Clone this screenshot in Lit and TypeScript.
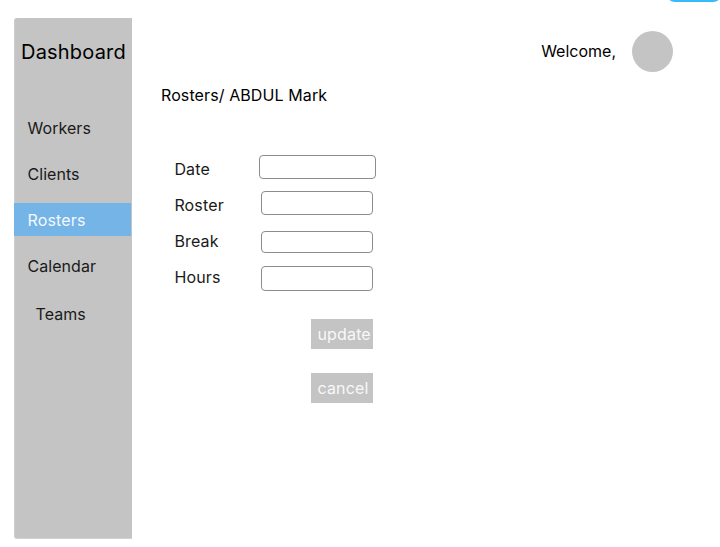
import { LitElement, html, css } from "lit";
import { customElement } from "lit/decorators.js";

@customElement("app-sidebar")
class AppSidebar extends LitElement {
  static styles = css`
    :host { display: block; flex: none; width: 118px; height: 521px; margin: 18px 0 0 14px;
      box-sizing: border-box; background: #c4c4c4; border-radius: 3px 0 0 3px;
      border-left: 1px solid #cecece; border-bottom: 1px solid #d2d2d2; }
    .title { box-sizing: border-box; margin: 0; padding: 21px 0 0 6px; height: 87px; font-size: 20px;
      line-height: 26px; font-weight: 400; letter-spacing: 0.2px; color: #000; white-space: nowrap; }
    nav { display: flex; flex-direction: column; margin: 6px 0 0 -1px; }
    .item { height: 33px; line-height: 35px; margin-bottom: 13px; padding-left: 13.5px; width: 103.5px;
      color: #1a1a1a; letter-spacing: 0.05px; }
    .active { background: #74b4e7; color: #f4f9fd; letter-spacing: 0.15px; }
    .last { margin-top: 2px; padding-left: 21.5px; width: 95.5px; }
  `;
  render() {
    return html`<h1 class="title">Dashboard</h1>
      <nav>
        <div class="item">Workers</div>
        <div class="item">Clients</div>
        <div class="item active">Rosters</div>
        <div class="item">Calendar</div>
        <div class="item last">Teams</div>
      </nav>`;
  }
}

@customElement("app-root")
class AppRoot extends LitElement {
  static styles = css`
    * { box-sizing: border-box; }
    :host { display: flex; position: relative; width: 720px; height: 547px; overflow: hidden;
      background: #fff; font: 16px/20px Inter, sans-serif; color: #000; }
    .pill { position: absolute; left: 666px; top: -22px; width: 56px; height: 24px;
      border-radius: 9px; background: #36bbfa; }
    main { flex: 1; display: flex; flex-direction: column; }
    header { display: flex; justify-content: flex-end; align-items: center; height: 41px;
      margin: 30.5px 47px 0 0; gap: 16px; }
    .avatar { width: 41px; height: 41px; border-radius: 50%; background: #c4c4c4; }
    .crumb { margin: 13.5px 0 0 29px; letter-spacing: 0.1px; }
    .form { margin: 45px 0 0 42.4px; width: 220px; display: grid; grid-template-columns: 83.6px auto;
      grid-auto-rows: 36px; color: #1a1a1a; letter-spacing: 0.15px; }
    .label { line-height: 36px; margin-top: 1px; }
    .field { border: 1px solid #8c8c8c; border-radius: 4px; background: #fff; height: 24px;
      width: 112px; margin: 5px 0 0 3px; }
    .date { width: 117px; margin-left: 1px; }
    .break { height: 22px; margin-top: 9px; }
    .hours { height: 25px; margin-top: 8px; }
    .actions { display: flex; flex-direction: column; gap: 24px; margin: 25px 0 0 179px; }
    .button { width: 62px; height: 30px; padding-left: 6.5px; line-height: 30px;
      background: #c4c4c4; color: #f8f8f8; letter-spacing: 0.15px; white-space: nowrap; }
  `;
  render() {
    return html`<app-sidebar></app-sidebar>
      <main>
        <header><span>Welcome,</span><div class="avatar"></div></header>
        <div class="crumb">Rosters/ ABDUL Mark</div>
        <div class="form">
          <div class="label">Date</div><div class="field date"></div>
          <div class="label">Roster</div><div class="field"></div>
          <div class="label">Break</div><div class="field break"></div>
          <div class="label">Hours</div><div class="field hours"></div>
        </div>
        <div class="actions">
          <div class="button">update</div>
          <div class="button">cancel</div>
        </div>
      </main>
      <div class="pill"></div>`;
  }
}
